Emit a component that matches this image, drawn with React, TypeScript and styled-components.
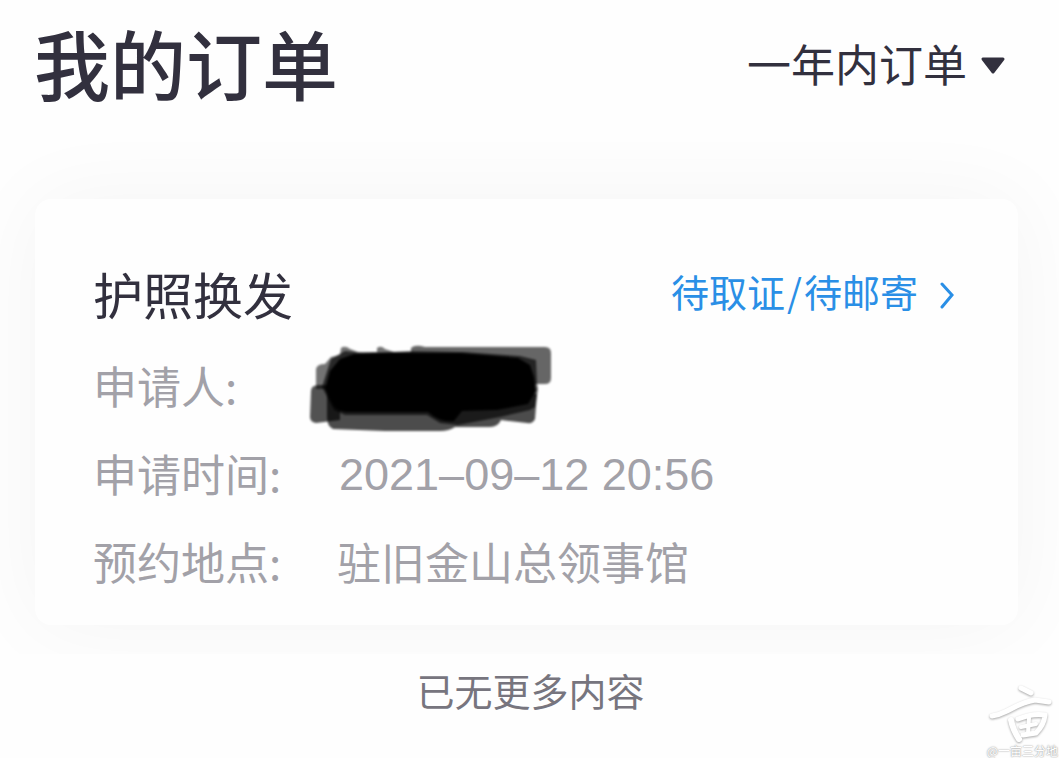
import React from "react";
import styled, { createGlobalStyle } from "styled-components";

const GlobalStyle = createGlobalStyle`
  * { box-sizing: border-box; }
  body {
    margin: 0;
    background: #fefefe;
    color: #32303e;
    font-family: "Noto Sans CJK SC", sans-serif;
  }
`;

const Page = styled.div`
  position: relative;
  min-height: 100vh;
  overflow: hidden;
`;

const Header = styled.header`
  display: flex;
  align-items: center;
  justify-content: space-between;
  height: 132px;
  padding: 0 53px 0 34px;
`;

const Title = styled.h1`
  margin: 0;
  padding-bottom: 8px;
  font-size: 76px;
  line-height: 100px;
  font-weight: 500;
`;

const Period = styled.label`
  display: flex;
  align-items: center;
  gap: 13px;
`;

const PeriodSelect = styled.select`
  appearance: none;
  border: 0;
  padding: 0 0 6px;
  background: none;
  color: inherit;
  font-family: inherit;
  font-size: 44px;
  line-height: 60px;
`;

const Orders = styled.main`
  margin-top: -32px;
  padding: 99px 41px 29px 35px;
  overflow: hidden;
`;

const Card = styled.article`
  padding: 62px 64px 20px 58px;
  border-radius: 16px;
  background: #fefefe;
  box-shadow: 0 0 88px rgba(0, 0, 0, 0.045);
`;

const CardHead = styled.div`
  display: flex;
  align-items: center;
  justify-content: space-between;
  height: 68px;
`;

const CardTitle = styled.h2`
  margin: 0;
  padding-bottom: 4px;
  font-size: 50px;
  line-height: 64px;
  font-weight: 400;
`;

const Status = styled.a`
  display: flex;
  align-items: center;
  gap: 22px;
  color: #2a8fe6;
  font-size: 38px;
  line-height: 60px;
  text-decoration: none;
`;

const StatusText = styled.span`
  padding-bottom: 8px;
`;

const Slash = styled.span`
  margin: 0 2px;
`;

const Details = styled.dl`
  margin: 12px 0 0;
`;

const Row = styled.div`
  display: flex;
  align-items: center;
  height: 88px;
  color: #a2a1a8;
  font-size: 44px;
  line-height: 60px;
`;

const Term = styled.dt`
  width: 244px;
`;

const Value = styled.dd`
  margin: 0;
`;

const DateValue = styled(Value)`
  padding: 4px 0 0 2px;
  font-family: "Liberation Sans", sans-serif;
  font-size: 45px;
`;

const Scribble = styled.svg`
  display: block;
  margin-left: -32px;
`;

const EndNote = styled.p`
  margin: 0;
  padding: 8px 0 8px 2px;
  color: #77757e;
  font-size: 38px;
  line-height: 56px;
  text-align: center;
`;

const Watermark = styled.div`
  position: absolute;
  right: 1px;
  bottom: 0;
  display: flex;
  flex-direction: column;
  align-items: center;
  color: #fff;
  font-size: 12px;
  line-height: 14px;
  text-shadow: 0 0 2px #999, 0 0 1px #aaa;
`;

const BrushMark = styled.svg`
  display: block;
  filter: drop-shadow(0 1px 1px rgba(0, 0, 0, 0.35));
`;

export default function App() {
  return (
    <Page>
      <GlobalStyle />
      <Header>
        <Title>我的订单</Title>
        <Period>
          <PeriodSelect aria-label="订单时间">
            <option>一年内订单</option>
          </PeriodSelect>
          <svg width="26" height="18" viewBox="0 0 26 18" aria-hidden="true">
            <path d="M3 2H23L13 15Z" fill="#32303e" stroke="#32303e" strokeWidth="3" strokeLinejoin="round" />
          </svg>
        </Period>
      </Header>
      <Orders>
        <Card>
          <CardHead>
            <CardTitle>护照换发</CardTitle>
            <Status href="#order">
              <StatusText>待取证<Slash>/</Slash>待邮寄</StatusText>
              <svg width="14" height="28" viewBox="0 0 14 28" aria-hidden="true">
                <path d="M2 3L12 14L2 26" fill="none" stroke="#2a8fe6" strokeWidth="3" strokeLinecap="round" />
              </svg>
            </Status>
          </CardHead>
          <Details>
            <Row>
              <Term>申请人:</Term>
              <Value>
                <Scribble width="250" height="88" viewBox="305 342 250 88" overflow="visible" role="img" aria-label="已隐藏">
                  <defs>
                    <filter id="soft" x="-5%" y="-10%" width="110%" height="120%">
                      <feGaussianBlur stdDeviation="1" />
                    </filter>
                  </defs>
                  <g fill="#000" filter="url(#soft)">
                    <path opacity=".6" d="M411 349Q415 345 425 348L545 348Q551 348 551 354V379Q551 385 545 385H411Z" />
                    <path opacity=".55" d="M316 370Q317 365 325 365L331 358L340 356L341 349Q345 346 350 350L358 353L377 353V349Q381 346 385 350L394 353L412 353V390H316Z" />
                    <path opacity=".68" d="M311 392Q311 386 319 386H340V421L316 424Q310 423 310 418Z" />
                    <path opacity=".7" d="M327 395H537L535 420Q533 425 527 424L501 421Q498 428 490 428H455Q449 432 440 432H385L333 430Q327 427 327 418Z" />
                    <path opacity=".65" d="M322 388L331 360L345 352L362 354L391 353L412 352L464 353L520 357L536 361L537 385L538 390L535 408L530 411L500 418L458 426L440 424L427 416L345 416L334 411Z" />
                    <path d="M330 372L340 360L354 355L380 354H460L518 359L530 366L534 378L536 392L528 405L497 411L462 412L454 422Q440 424 428 413H345Q334 411 331 402L325 390Z" />
                  </g>
                </Scribble>
              </Value>
            </Row>
            <Row>
              <Term>申请时间:</Term>
              <DateValue>2021–09–12 20:56</DateValue>
            </Row>
            <Row>
              <Term>预约地点:</Term>
              <Value>驻旧金山总领事馆</Value>
            </Row>
          </Details>
        </Card>
      </Orders>
      <EndNote>已无更多内容</EndNote>
      <Watermark>
        <BrushMark width="70" height="60" viewBox="0 0 70 60" aria-hidden="true">
          <g fill="none" stroke="#fff" strokeLinecap="round" strokeLinejoin="round">
            <path d="M34 4L44 9" strokeWidth="5" />
            <path d="M5 32Q12 31 20 27Q36 18 48 16L62 18" strokeWidth="5" />
            <path d="M24 36Q26 46 32 55" strokeWidth="6" />
            <path d="M31 35Q46 29 58 31Q57 41 49 49L36 51" strokeWidth="5" />
            <path d="M42 34L41 49M34 43L49 40" strokeWidth="4" />
          </g>
        </BrushMark>
        <span>@一亩三分地</span>
      </Watermark>
    </Page>
  );
}
